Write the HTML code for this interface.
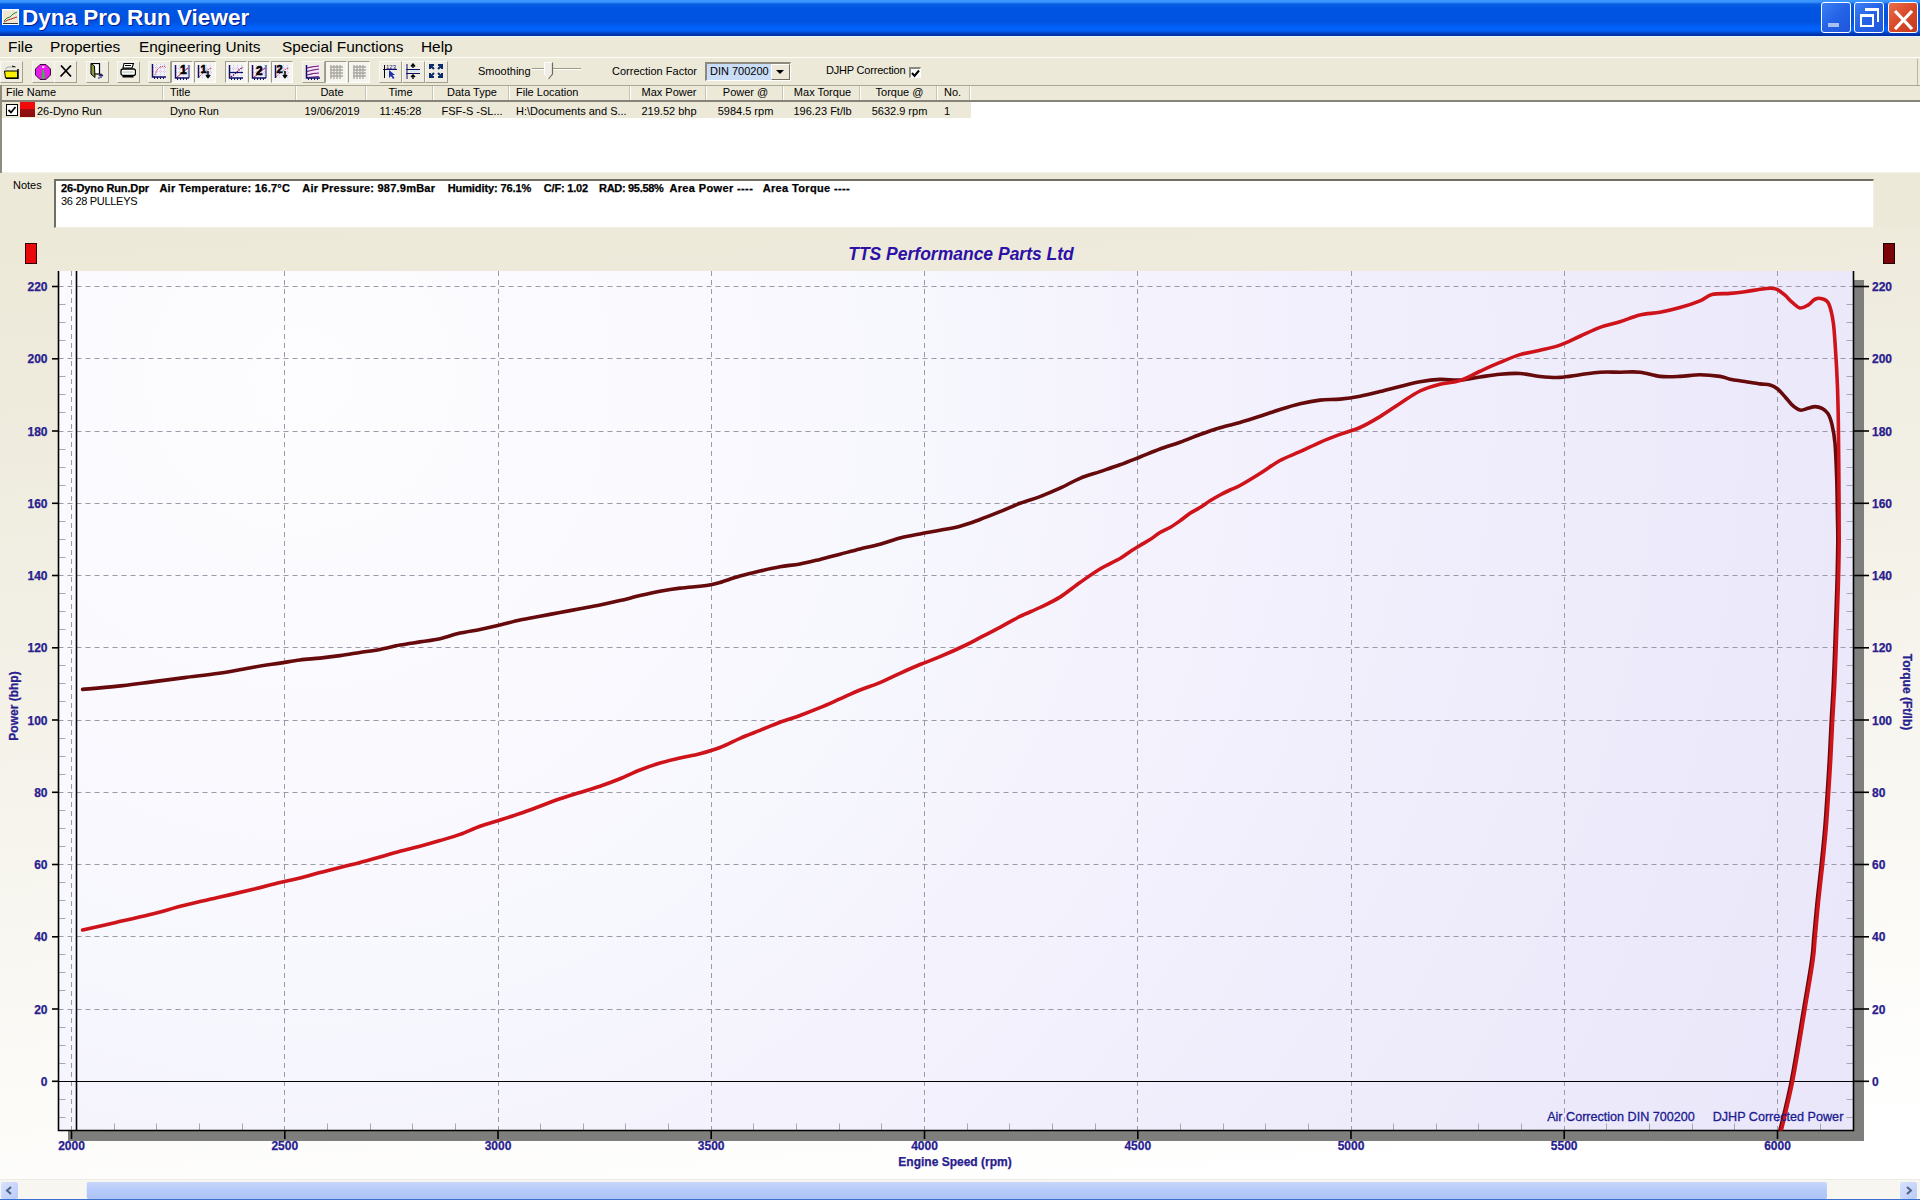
<!DOCTYPE html>
<html><head><meta charset="utf-8"><title>Dyna Pro Run Viewer</title>
<style>
*{margin:0;padding:0;box-sizing:border-box}
html,body{width:1920px;height:1200px;overflow:hidden;background:#ECE9D8;font-family:"Liberation Sans",sans-serif;position:relative}
.abs{position:absolute}
#title{left:0;top:0;width:1920px;height:36px;background:linear-gradient(to bottom,#3A95FF 0px,#3A95FF 2px,#0A5EE0 4px,#0055E3 8px,#0053E0 22px,#005EF4 26px,#0064FF 30px,#0052DC 32px,#0036B0 34px,#0030A8 35px,#0030A8 36px)}
#title .t{left:22px;top:5px;color:#fff;font-weight:bold;font-size:22.5px;letter-spacing:0;text-shadow:1px 1px 0 #0A1E8A}
#menubar{left:0;top:36px;width:1920px;height:21px;background:#ECE9D8;border-top:1px solid #E3F3FF}
#menubar span{position:absolute;top:0.5px;font-size:15.4px;color:#000}
#toolbar{left:0;top:57px;width:1920px;height:28px;background:#ECE9D8}
#panel{left:0;top:228px;width:1920px;height:952px;background:linear-gradient(175deg,#ECE9D8 0%,#EFECDF 20%,#F5F3EB 50%,#FBFAF6 75%,#FFFFFF 95%)}
.chart{position:absolute;left:0;top:0}
#list{left:0;top:85px;width:1920px;height:90px}
.hdr{position:absolute;top:0;height:16px;background:#EBEADB;border-right:1px solid #fff;font-size:11px;color:#000}
.hdr span{position:absolute;top:1px}
.cell{position:absolute;top:18px;font-size:11px;color:#000}
#notes{left:54px;top:179px;width:1820px;height:49px;background:#fff;border-top:2px solid #716F64;border-left:2px solid #716F64;border-right:1px solid #F1EFE2;border-bottom:1px solid #F1EFE2}
.nb{top:0.5px;font-size:11px;font-weight:bold;white-space:pre;-webkit-text-stroke:0.25px #000}
#scroll{left:0;top:1179px;width:1920px;height:21px;background:#F7F6F1;border-top:1px solid #ECEBE4}
</style></head><body>
<div id="panel" class="abs"></div>
<svg class="chart" width="1920" height="1200" viewBox="0 0 1920 1200"><defs><radialGradient id="pg" gradientUnits="userSpaceOnUse" cx="300" cy="380" r="1750" fx="300" fy="380"><stop offset="0" stop-color="#FDFDFF"/><stop offset="0.35" stop-color="#F7F7FE"/><stop offset="0.75" stop-color="#EEEBFB"/><stop offset="1" stop-color="#E9E6FA"/></radialGradient><clipPath id="pc"><rect x="58.5" y="271" width="1795.0" height="859.5"/></clipPath></defs><rect x="1854" y="280" width="10" height="861" fill="#7E7E7C"/><rect x="68" y="1131" width="1796" height="10" fill="#7E7E7C"/><rect x="58.5" y="271" width="1795.0" height="859.5" fill="url(#pg)"/><g stroke="#9A9AA8" stroke-width="1" stroke-dasharray="5,4"><line x1="58.5" y1="1009.5" x2="1853.5" y2="1009.5"/><line x1="58.5" y1="936.5" x2="1853.5" y2="936.5"/><line x1="58.5" y1="864.5" x2="1853.5" y2="864.5"/><line x1="58.5" y1="792.5" x2="1853.5" y2="792.5"/><line x1="58.5" y1="720.5" x2="1853.5" y2="720.5"/><line x1="58.5" y1="647.5" x2="1853.5" y2="647.5"/><line x1="58.5" y1="575.5" x2="1853.5" y2="575.5"/><line x1="58.5" y1="503.5" x2="1853.5" y2="503.5"/><line x1="58.5" y1="431.5" x2="1853.5" y2="431.5"/><line x1="58.5" y1="358.5" x2="1853.5" y2="358.5"/><line x1="58.5" y1="286.5" x2="1853.5" y2="286.5"/><line x1="71.5" y1="271" x2="71.5" y2="1130.5"/><line x1="284.5" y1="271" x2="284.5" y2="1130.5"/><line x1="498.5" y1="271" x2="498.5" y2="1130.5"/><line x1="711.5" y1="271" x2="711.5" y2="1130.5"/><line x1="924.5" y1="271" x2="924.5" y2="1130.5"/><line x1="1137.5" y1="271" x2="1137.5" y2="1130.5"/><line x1="1351.5" y1="271" x2="1351.5" y2="1130.5"/><line x1="1564.5" y1="271" x2="1564.5" y2="1130.5"/><line x1="1777.5" y1="271" x2="1777.5" y2="1130.5"/></g><g stroke="#A8A8B0" stroke-width="1"><line x1="58.5" y1="1117.5" x2="65.5" y2="1117.5"/><line x1="1846.5" y1="1117.5" x2="1853.5" y2="1117.5"/><line x1="58.5" y1="1099.5" x2="65.5" y2="1099.5"/><line x1="1846.5" y1="1099.5" x2="1853.5" y2="1099.5"/><line x1="58.5" y1="1063.5" x2="65.5" y2="1063.5"/><line x1="1846.5" y1="1063.5" x2="1853.5" y2="1063.5"/><line x1="58.5" y1="1045.5" x2="65.5" y2="1045.5"/><line x1="1846.5" y1="1045.5" x2="1853.5" y2="1045.5"/><line x1="58.5" y1="1027.5" x2="65.5" y2="1027.5"/><line x1="1846.5" y1="1027.5" x2="1853.5" y2="1027.5"/><line x1="58.5" y1="990.5" x2="65.5" y2="990.5"/><line x1="1846.5" y1="990.5" x2="1853.5" y2="990.5"/><line x1="58.5" y1="972.5" x2="65.5" y2="972.5"/><line x1="1846.5" y1="972.5" x2="1853.5" y2="972.5"/><line x1="58.5" y1="954.5" x2="65.5" y2="954.5"/><line x1="1846.5" y1="954.5" x2="1853.5" y2="954.5"/><line x1="58.5" y1="918.5" x2="65.5" y2="918.5"/><line x1="1846.5" y1="918.5" x2="1853.5" y2="918.5"/><line x1="58.5" y1="900.5" x2="65.5" y2="900.5"/><line x1="1846.5" y1="900.5" x2="1853.5" y2="900.5"/><line x1="58.5" y1="882.5" x2="65.5" y2="882.5"/><line x1="1846.5" y1="882.5" x2="1853.5" y2="882.5"/><line x1="58.5" y1="846.5" x2="65.5" y2="846.5"/><line x1="1846.5" y1="846.5" x2="1853.5" y2="846.5"/><line x1="58.5" y1="828.5" x2="65.5" y2="828.5"/><line x1="1846.5" y1="828.5" x2="1853.5" y2="828.5"/><line x1="58.5" y1="810.5" x2="65.5" y2="810.5"/><line x1="1846.5" y1="810.5" x2="1853.5" y2="810.5"/><line x1="58.5" y1="774.5" x2="65.5" y2="774.5"/><line x1="1846.5" y1="774.5" x2="1853.5" y2="774.5"/><line x1="58.5" y1="756.5" x2="65.5" y2="756.5"/><line x1="1846.5" y1="756.5" x2="1853.5" y2="756.5"/><line x1="58.5" y1="738.5" x2="65.5" y2="738.5"/><line x1="1846.5" y1="738.5" x2="1853.5" y2="738.5"/><line x1="58.5" y1="701.5" x2="65.5" y2="701.5"/><line x1="1846.5" y1="701.5" x2="1853.5" y2="701.5"/><line x1="58.5" y1="683.5" x2="65.5" y2="683.5"/><line x1="1846.5" y1="683.5" x2="1853.5" y2="683.5"/><line x1="58.5" y1="665.5" x2="65.5" y2="665.5"/><line x1="1846.5" y1="665.5" x2="1853.5" y2="665.5"/><line x1="58.5" y1="629.5" x2="65.5" y2="629.5"/><line x1="1846.5" y1="629.5" x2="1853.5" y2="629.5"/><line x1="58.5" y1="611.5" x2="65.5" y2="611.5"/><line x1="1846.5" y1="611.5" x2="1853.5" y2="611.5"/><line x1="58.5" y1="593.5" x2="65.5" y2="593.5"/><line x1="1846.5" y1="593.5" x2="1853.5" y2="593.5"/><line x1="58.5" y1="557.5" x2="65.5" y2="557.5"/><line x1="1846.5" y1="557.5" x2="1853.5" y2="557.5"/><line x1="58.5" y1="539.5" x2="65.5" y2="539.5"/><line x1="1846.5" y1="539.5" x2="1853.5" y2="539.5"/><line x1="58.5" y1="521.5" x2="65.5" y2="521.5"/><line x1="1846.5" y1="521.5" x2="1853.5" y2="521.5"/><line x1="58.5" y1="485.5" x2="65.5" y2="485.5"/><line x1="1846.5" y1="485.5" x2="1853.5" y2="485.5"/><line x1="58.5" y1="467.5" x2="65.5" y2="467.5"/><line x1="1846.5" y1="467.5" x2="1853.5" y2="467.5"/><line x1="58.5" y1="449.5" x2="65.5" y2="449.5"/><line x1="1846.5" y1="449.5" x2="1853.5" y2="449.5"/><line x1="58.5" y1="412.5" x2="65.5" y2="412.5"/><line x1="1846.5" y1="412.5" x2="1853.5" y2="412.5"/><line x1="58.5" y1="394.5" x2="65.5" y2="394.5"/><line x1="1846.5" y1="394.5" x2="1853.5" y2="394.5"/><line x1="58.5" y1="376.5" x2="65.5" y2="376.5"/><line x1="1846.5" y1="376.5" x2="1853.5" y2="376.5"/><line x1="58.5" y1="340.5" x2="65.5" y2="340.5"/><line x1="1846.5" y1="340.5" x2="1853.5" y2="340.5"/><line x1="58.5" y1="322.5" x2="65.5" y2="322.5"/><line x1="1846.5" y1="322.5" x2="1853.5" y2="322.5"/><line x1="58.5" y1="304.5" x2="65.5" y2="304.5"/><line x1="1846.5" y1="304.5" x2="1853.5" y2="304.5"/><line x1="114.5" y1="1123.5" x2="114.5" y2="1130.5"/><line x1="156.5" y1="1123.5" x2="156.5" y2="1130.5"/><line x1="199.5" y1="1123.5" x2="199.5" y2="1130.5"/><line x1="242.5" y1="1123.5" x2="242.5" y2="1130.5"/><line x1="327.5" y1="1123.5" x2="327.5" y2="1130.5"/><line x1="370.5" y1="1123.5" x2="370.5" y2="1130.5"/><line x1="412.5" y1="1123.5" x2="412.5" y2="1130.5"/><line x1="455.5" y1="1123.5" x2="455.5" y2="1130.5"/><line x1="540.5" y1="1123.5" x2="540.5" y2="1130.5"/><line x1="583.5" y1="1123.5" x2="583.5" y2="1130.5"/><line x1="625.5" y1="1123.5" x2="625.5" y2="1130.5"/><line x1="668.5" y1="1123.5" x2="668.5" y2="1130.5"/><line x1="753.5" y1="1123.5" x2="753.5" y2="1130.5"/><line x1="796.5" y1="1123.5" x2="796.5" y2="1130.5"/><line x1="839.5" y1="1123.5" x2="839.5" y2="1130.5"/><line x1="881.5" y1="1123.5" x2="881.5" y2="1130.5"/><line x1="967.5" y1="1123.5" x2="967.5" y2="1130.5"/><line x1="1009.5" y1="1123.5" x2="1009.5" y2="1130.5"/><line x1="1052.5" y1="1123.5" x2="1052.5" y2="1130.5"/><line x1="1095.5" y1="1123.5" x2="1095.5" y2="1130.5"/><line x1="1180.5" y1="1123.5" x2="1180.5" y2="1130.5"/><line x1="1223.5" y1="1123.5" x2="1223.5" y2="1130.5"/><line x1="1265.5" y1="1123.5" x2="1265.5" y2="1130.5"/><line x1="1308.5" y1="1123.5" x2="1308.5" y2="1130.5"/><line x1="1393.5" y1="1123.5" x2="1393.5" y2="1130.5"/><line x1="1436.5" y1="1123.5" x2="1436.5" y2="1130.5"/><line x1="1478.5" y1="1123.5" x2="1478.5" y2="1130.5"/><line x1="1521.5" y1="1123.5" x2="1521.5" y2="1130.5"/><line x1="1606.5" y1="1123.5" x2="1606.5" y2="1130.5"/><line x1="1649.5" y1="1123.5" x2="1649.5" y2="1130.5"/><line x1="1692.5" y1="1123.5" x2="1692.5" y2="1130.5"/><line x1="1734.5" y1="1123.5" x2="1734.5" y2="1130.5"/><line x1="1820.5" y1="1123.5" x2="1820.5" y2="1130.5"/></g><g stroke="#000" stroke-width="1.6"><line x1="52" y1="1081.3" x2="58.5" y2="1081.3"/><line x1="1853.5" y1="1081.3" x2="1869" y2="1081.3"/><line x1="52" y1="1009.0" x2="58.5" y2="1009.0"/><line x1="1853.5" y1="1009.0" x2="1869" y2="1009.0"/><line x1="52" y1="936.8" x2="58.5" y2="936.8"/><line x1="1853.5" y1="936.8" x2="1869" y2="936.8"/><line x1="52" y1="864.5" x2="58.5" y2="864.5"/><line x1="1853.5" y1="864.5" x2="1869" y2="864.5"/><line x1="52" y1="792.3" x2="58.5" y2="792.3"/><line x1="1853.5" y1="792.3" x2="1869" y2="792.3"/><line x1="52" y1="720.0" x2="58.5" y2="720.0"/><line x1="1853.5" y1="720.0" x2="1869" y2="720.0"/><line x1="52" y1="647.8" x2="58.5" y2="647.8"/><line x1="1853.5" y1="647.8" x2="1869" y2="647.8"/><line x1="52" y1="575.5" x2="58.5" y2="575.5"/><line x1="1853.5" y1="575.5" x2="1869" y2="575.5"/><line x1="52" y1="503.3" x2="58.5" y2="503.3"/><line x1="1853.5" y1="503.3" x2="1869" y2="503.3"/><line x1="52" y1="431.0" x2="58.5" y2="431.0"/><line x1="1853.5" y1="431.0" x2="1869" y2="431.0"/><line x1="52" y1="358.8" x2="58.5" y2="358.8"/><line x1="1853.5" y1="358.8" x2="1869" y2="358.8"/><line x1="52" y1="286.5" x2="58.5" y2="286.5"/><line x1="1853.5" y1="286.5" x2="1869" y2="286.5"/><line x1="71.5" y1="1130.5" x2="71.5" y2="1139"/><line x1="284.8" y1="1130.5" x2="284.8" y2="1139"/><line x1="498.0" y1="1130.5" x2="498.0" y2="1139"/><line x1="711.2" y1="1130.5" x2="711.2" y2="1139"/><line x1="924.5" y1="1130.5" x2="924.5" y2="1139"/><line x1="1137.8" y1="1130.5" x2="1137.8" y2="1139"/><line x1="1351.0" y1="1130.5" x2="1351.0" y2="1139"/><line x1="1564.2" y1="1130.5" x2="1564.2" y2="1139"/><line x1="1777.5" y1="1130.5" x2="1777.5" y2="1139"/></g><line x1="58.5" y1="1081.5" x2="1853.5" y2="1081.5" stroke="#000" stroke-width="1.2"/><path d="M58.5,271 V1130.5 H1853.5 V271" fill="none" stroke="#000" stroke-width="1.6"/><line x1="76.5" y1="271" x2="76.5" y2="1130.5" stroke="#000" stroke-width="1.6"/><g clip-path="url(#pc)" fill="none" stroke-linejoin="round" stroke-linecap="round"><path d="M82.60,689.40 C88.13,688.90 104.53,687.62 115.80,686.40 C127.07,685.18 138.73,683.57 150.20,682.10 C161.67,680.63 173.13,679.07 184.60,677.60 C196.07,676.13 207.55,675.03 219.00,673.30 C230.45,671.57 243.13,668.90 253.30,667.20 C263.47,665.50 272.22,664.30 280.00,663.10 C287.78,661.90 293.33,660.83 300.00,660.00 C306.67,659.17 313.33,658.83 320.00,658.10 C326.67,657.37 333.33,656.53 340.00,655.60 C346.67,654.67 353.33,653.53 360.00,652.50 C366.67,651.47 373.33,650.65 380.00,649.40 C386.67,648.15 393.33,646.25 400.00,645.00 C406.67,643.75 413.33,642.94 420.00,641.90 C426.67,640.86 433.33,640.22 440.00,638.75 C446.67,637.28 453.33,634.66 460.00,633.10 C466.67,631.54 473.33,630.75 480.00,629.40 C486.67,628.05 493.33,626.57 500.00,625.00 C506.67,623.43 513.33,621.46 520.00,620.00 C526.67,618.54 533.33,617.50 540.00,616.25 C546.67,615.00 553.33,613.75 560.00,612.50 C566.67,611.25 573.33,610.00 580.00,608.75 C586.67,607.50 593.33,606.36 600.00,605.00 C606.67,603.64 613.33,602.17 620.00,600.60 C626.67,599.03 633.33,597.16 640.00,595.60 C646.67,594.04 653.33,592.50 660.00,591.25 C666.67,590.00 673.33,588.93 680.00,588.10 C686.67,587.27 694.83,586.81 700.00,586.25 C705.17,585.69 707.67,585.38 711.00,584.75 C714.33,584.12 715.17,583.94 720.00,582.50 C724.83,581.06 733.33,578.02 740.00,576.10 C746.67,574.18 753.33,572.57 760.00,571.00 C766.67,569.43 773.33,567.87 780.00,566.70 C786.67,565.53 793.33,565.22 800.00,564.00 C806.67,562.78 813.33,561.03 820.00,559.40 C826.67,557.77 833.33,555.93 840.00,554.20 C846.67,552.47 853.33,550.65 860.00,549.00 C866.67,547.35 873.33,546.13 880.00,544.30 C886.67,542.47 893.33,539.73 900.00,538.00 C906.67,536.27 913.33,535.18 920.00,533.90 C926.67,532.62 933.33,531.57 940.00,530.30 C946.67,529.02 953.33,528.05 960.00,526.25 C966.67,524.45 973.33,521.92 980.00,519.50 C986.67,517.08 993.33,514.40 1000.00,511.70 C1006.67,509.00 1013.33,505.82 1020.00,503.30 C1026.67,500.78 1033.33,499.12 1040.00,496.60 C1046.67,494.08 1053.33,491.25 1060.00,488.20 C1066.67,485.15 1073.33,481.07 1080.00,478.30 C1086.67,475.53 1093.33,473.85 1100.00,471.60 C1106.67,469.35 1113.33,467.23 1120.00,464.80 C1126.67,462.37 1133.33,459.63 1140.00,457.00 C1146.67,454.37 1153.33,451.45 1160.00,449.00 C1166.67,446.55 1173.33,444.72 1180.00,442.30 C1186.67,439.88 1193.33,436.93 1200.00,434.50 C1206.67,432.07 1213.33,429.70 1220.00,427.70 C1226.67,425.70 1233.33,424.41 1240.00,422.50 C1246.67,420.59 1253.33,418.42 1260.00,416.25 C1266.67,414.08 1273.33,411.58 1280.00,409.50 C1286.67,407.42 1293.33,405.32 1300.00,403.75 C1306.67,402.18 1313.33,400.88 1320.00,400.10 C1326.67,399.33 1333.33,399.74 1340.00,399.10 C1346.67,398.46 1353.33,397.50 1360.00,396.25 C1366.67,395.00 1373.33,393.24 1380.00,391.60 C1386.67,389.96 1393.33,388.05 1400.00,386.40 C1406.67,384.75 1413.33,382.87 1420.00,381.70 C1426.67,380.53 1433.33,379.67 1440.00,379.40 C1446.67,379.13 1453.33,380.50 1460.00,380.10 C1466.67,379.70 1473.33,377.98 1480.00,377.00 C1486.67,376.02 1493.33,374.78 1500.00,374.20 C1506.67,373.62 1513.33,373.12 1520.00,373.50 C1526.67,373.88 1533.33,375.80 1540.00,376.45 C1546.67,377.10 1553.33,377.67 1560.00,377.40 C1566.67,377.12 1573.33,375.67 1580.00,374.80 C1586.67,373.93 1593.33,372.63 1600.00,372.20 C1606.67,371.77 1613.33,372.20 1620.00,372.20 C1626.67,372.20 1633.33,371.50 1640.00,372.20 C1646.67,372.90 1653.33,375.70 1660.00,376.40 C1666.67,377.10 1673.33,376.67 1680.00,376.40 C1686.67,376.13 1693.33,374.80 1700.00,374.80 C1706.67,374.80 1715.00,375.67 1720.00,376.40 C1725.00,377.13 1725.83,378.35 1730.00,379.20 C1734.17,380.05 1740.00,380.73 1745.00,381.50 C1750.00,382.27 1755.83,383.27 1760.00,383.85 C1764.17,384.43 1767.17,384.23 1770.00,385.00 C1772.83,385.77 1774.50,386.55 1777.00,388.50 C1779.50,390.45 1782.50,393.97 1785.00,396.70 C1787.50,399.43 1789.50,402.67 1792.00,404.90 C1794.50,407.13 1797.33,409.53 1800.00,410.10 C1802.67,410.68 1805.50,408.93 1808.00,408.35 C1810.50,407.77 1812.67,406.60 1815.00,406.60 C1817.33,406.60 1819.83,407.18 1822.00,408.35 C1824.17,409.52 1826.33,410.88 1828.00,413.60 C1829.67,416.33 1830.83,419.75 1832.00,424.70 C1833.17,429.65 1834.22,434.37 1835.00,443.30 C1835.78,452.23 1836.30,466.68 1836.70,478.30 C1837.10,489.92 1837.22,502.72 1837.40,513.00 C1837.58,523.28 1837.83,529.67 1837.80,540.00 C1837.77,550.33 1837.48,563.33 1837.20,575.00 C1836.92,586.67 1836.50,598.00 1836.10,610.00 C1835.70,622.00 1835.27,634.50 1834.80,647.00 C1834.33,659.50 1833.88,672.83 1833.30,685.00 C1832.72,697.17 1831.97,707.50 1831.30,720.00 C1830.63,732.50 1829.97,748.00 1829.30,760.00 C1828.63,772.00 1828.05,780.67 1827.30,792.00 C1826.55,803.33 1825.80,816.00 1824.80,828.00 C1823.80,840.00 1822.55,852.00 1821.30,864.00 C1820.05,876.00 1818.53,888.00 1817.30,900.00 C1816.07,912.00 1814.83,926.00 1813.90,936.00 C1812.97,946.00 1813.38,948.00 1811.70,960.00 C1810.02,972.00 1807.20,987.83 1803.80,1008.00 C1800.40,1028.17 1795.38,1060.17 1791.30,1081.00 C1787.22,1101.83 1781.30,1124.33 1779.30,1133.00" stroke="#660A0C" stroke-width="3.6"/><path d="M82.60,930.00 C88.13,928.75 104.53,925.08 115.80,922.50 C127.07,919.92 138.73,917.37 150.20,914.50 C161.67,911.63 173.13,908.17 184.60,905.30 C196.07,902.43 207.55,899.97 219.00,897.30 C230.45,894.63 243.13,891.77 253.30,889.30 C263.47,886.83 272.22,884.37 280.00,882.50 C287.78,880.63 293.33,879.77 300.00,878.10 C306.67,876.43 313.33,874.27 320.00,872.50 C326.67,870.73 333.33,869.17 340.00,867.50 C346.67,865.83 353.33,864.27 360.00,862.50 C366.67,860.73 373.33,858.77 380.00,856.90 C386.67,855.02 393.33,853.02 400.00,851.25 C406.67,849.48 413.33,848.02 420.00,846.25 C426.67,844.48 433.33,842.58 440.00,840.60 C446.67,838.62 453.33,836.79 460.00,834.40 C466.67,832.01 473.33,828.65 480.00,826.25 C486.67,823.85 493.33,822.12 500.00,820.00 C506.67,817.88 513.33,815.79 520.00,813.50 C526.67,811.21 533.33,808.71 540.00,806.25 C546.67,803.79 553.33,801.04 560.00,798.75 C566.67,796.46 573.33,794.58 580.00,792.50 C586.67,790.42 593.33,788.54 600.00,786.25 C606.67,783.96 613.33,781.46 620.00,778.75 C626.67,776.04 633.33,772.61 640.00,770.00 C646.67,767.39 653.33,765.08 660.00,763.10 C666.67,761.12 673.33,759.66 680.00,758.10 C686.67,756.54 693.33,755.52 700.00,753.75 C706.67,751.98 713.33,750.08 720.00,747.50 C726.67,744.92 733.33,741.17 740.00,738.30 C746.67,735.43 753.33,732.97 760.00,730.30 C766.67,727.63 773.33,724.77 780.00,722.30 C786.67,719.83 793.33,717.93 800.00,715.50 C806.67,713.07 813.33,710.47 820.00,707.70 C826.67,704.93 833.33,701.85 840.00,698.90 C846.67,695.95 853.33,692.70 860.00,690.00 C866.67,687.30 873.33,685.48 880.00,682.70 C886.67,679.92 893.33,676.33 900.00,673.30 C906.67,670.27 913.33,667.27 920.00,664.50 C926.67,661.73 932.33,659.95 940.00,656.70 C947.67,653.45 959.33,648.17 966.00,645.00 C972.67,641.83 974.33,640.65 980.00,637.70 C985.67,634.75 993.33,630.85 1000.00,627.30 C1006.67,623.75 1013.33,619.70 1020.00,616.40 C1026.67,613.10 1033.33,610.72 1040.00,607.50 C1046.67,604.28 1053.33,601.27 1060.00,597.10 C1066.67,592.93 1073.33,587.18 1080.00,582.50 C1086.67,577.82 1093.33,573.00 1100.00,569.00 C1106.67,565.00 1115.00,561.38 1120.00,558.50 C1125.00,555.62 1126.67,553.87 1130.00,551.70 C1133.33,549.53 1136.67,547.52 1140.00,545.50 C1143.33,543.48 1146.67,541.77 1150.00,539.60 C1153.33,537.43 1156.67,534.52 1160.00,532.50 C1163.33,530.48 1166.67,529.45 1170.00,527.50 C1173.33,525.55 1176.67,523.17 1180.00,520.80 C1183.33,518.43 1186.67,515.52 1190.00,513.30 C1193.33,511.08 1196.67,509.58 1200.00,507.50 C1203.33,505.42 1206.67,502.88 1210.00,500.80 C1213.33,498.72 1216.67,496.80 1220.00,495.00 C1223.33,493.20 1226.67,491.58 1230.00,490.00 C1233.33,488.42 1235.00,488.25 1240.00,485.50 C1245.00,482.75 1253.33,477.67 1260.00,473.50 C1266.67,469.33 1273.33,464.13 1280.00,460.50 C1286.67,456.87 1293.33,454.73 1300.00,451.70 C1306.67,448.67 1313.33,445.18 1320.00,442.30 C1326.67,439.42 1333.33,436.87 1340.00,434.40 C1346.67,431.93 1353.33,430.47 1360.00,427.50 C1366.67,424.53 1373.33,420.60 1380.00,416.60 C1386.67,412.60 1393.33,407.77 1400.00,403.50 C1406.67,399.23 1413.33,394.20 1420.00,391.00 C1426.67,387.80 1433.33,386.03 1440.00,384.30 C1446.67,382.57 1453.33,382.78 1460.00,380.60 C1466.67,378.43 1473.33,374.28 1480.00,371.25 C1486.67,368.22 1493.33,365.17 1500.00,362.40 C1506.67,359.62 1513.33,356.62 1520.00,354.60 C1526.67,352.58 1533.33,351.88 1540.00,350.30 C1546.67,348.72 1553.33,347.44 1560.00,345.10 C1566.67,342.76 1573.33,339.20 1580.00,336.25 C1586.67,333.30 1593.33,329.82 1600.00,327.40 C1606.67,324.97 1613.33,323.78 1620.00,321.70 C1626.67,319.62 1633.33,316.47 1640.00,314.90 C1646.67,313.33 1653.33,313.52 1660.00,312.30 C1666.67,311.08 1673.33,309.52 1680.00,307.60 C1686.67,305.68 1694.67,302.97 1700.00,300.80 C1705.33,298.63 1707.00,295.83 1712.00,294.60 C1717.00,293.37 1724.50,293.88 1730.00,293.40 C1735.50,292.92 1740.00,292.38 1745.00,291.70 C1750.00,291.02 1755.83,289.88 1760.00,289.30 C1764.17,288.72 1767.17,288.20 1770.00,288.20 C1772.83,288.20 1774.50,288.13 1777.00,289.30 C1779.50,290.47 1782.50,293.05 1785.00,295.20 C1787.50,297.35 1789.50,300.07 1792.00,302.20 C1794.50,304.33 1797.33,307.52 1800.00,308.00 C1802.67,308.48 1805.50,306.56 1808.00,305.10 C1810.50,303.64 1812.67,300.32 1815.00,299.25 C1817.33,298.18 1819.75,298.02 1822.00,298.70 C1824.25,299.38 1826.63,299.42 1828.50,303.30 C1830.37,307.18 1832.03,314.22 1833.20,322.00 C1834.37,329.78 1834.80,339.50 1835.50,350.00 C1836.20,360.50 1836.93,373.33 1837.40,385.00 C1837.87,396.67 1838.07,406.38 1838.30,420.00 C1838.53,433.62 1838.65,446.70 1838.80,466.70 C1838.95,486.70 1839.23,521.95 1839.20,540.00 C1839.17,558.05 1838.88,563.33 1838.60,575.00 C1838.32,586.67 1837.90,598.00 1837.50,610.00 C1837.10,622.00 1836.67,634.50 1836.20,647.00 C1835.73,659.50 1835.28,672.83 1834.70,685.00 C1834.12,697.17 1833.37,707.50 1832.70,720.00 C1832.03,732.50 1831.37,748.00 1830.70,760.00 C1830.03,772.00 1829.45,780.67 1828.70,792.00 C1827.95,803.33 1827.20,816.00 1826.20,828.00 C1825.20,840.00 1823.95,852.00 1822.70,864.00 C1821.45,876.00 1819.93,888.00 1818.70,900.00 C1817.47,912.00 1816.23,926.00 1815.30,936.00 C1814.37,946.00 1814.78,948.00 1813.10,960.00 C1811.42,972.00 1808.60,987.83 1805.20,1008.00 C1801.80,1028.17 1796.78,1060.17 1792.70,1081.00 C1788.62,1101.83 1782.70,1124.33 1780.70,1133.00" stroke="#CE141A" stroke-width="3.6"/></g><g font-family="Liberation Sans, sans-serif" font-weight="bold" font-size="12" fill="#28208E" stroke="#28208E" stroke-width="0.25"><text x="47.5" y="1085.8" text-anchor="end">0</text><text x="1872" y="1085.8">0</text><text x="47.5" y="1013.5" text-anchor="end">20</text><text x="1872" y="1013.5">20</text><text x="47.5" y="941.3" text-anchor="end">40</text><text x="1872" y="941.3">40</text><text x="47.5" y="869.0" text-anchor="end">60</text><text x="1872" y="869.0">60</text><text x="47.5" y="796.8" text-anchor="end">80</text><text x="1872" y="796.8">80</text><text x="47.5" y="724.5" text-anchor="end">100</text><text x="1872" y="724.5">100</text><text x="47.5" y="652.3" text-anchor="end">120</text><text x="1872" y="652.3">120</text><text x="47.5" y="580.0" text-anchor="end">140</text><text x="1872" y="580.0">140</text><text x="47.5" y="507.8" text-anchor="end">160</text><text x="1872" y="507.8">160</text><text x="47.5" y="435.5" text-anchor="end">180</text><text x="1872" y="435.5">180</text><text x="47.5" y="363.3" text-anchor="end">200</text><text x="1872" y="363.3">200</text><text x="47.5" y="291.0" text-anchor="end">220</text><text x="1872" y="291.0">220</text><text x="71.5" y="1150" text-anchor="middle">2000</text><text x="284.8" y="1150" text-anchor="middle">2500</text><text x="498.0" y="1150" text-anchor="middle">3000</text><text x="711.2" y="1150" text-anchor="middle">3500</text><text x="924.5" y="1150" text-anchor="middle">4000</text><text x="1137.8" y="1150" text-anchor="middle">4500</text><text x="1351.0" y="1150" text-anchor="middle">5000</text><text x="1564.2" y="1150" text-anchor="middle">5500</text><text x="1777.5" y="1150" text-anchor="middle">6000</text></g><text x="955" y="1166" text-anchor="middle" font-family="Liberation Sans, sans-serif" font-weight="bold" font-size="12" fill="#28208E" stroke="#28208E" stroke-width="0.25">Engine Speed (rpm)</text><text transform="translate(18,706) rotate(-90)" text-anchor="middle" font-family="Liberation Sans, sans-serif" font-weight="bold" font-size="12" fill="#28208E" stroke="#28208E" stroke-width="0.25">Power (bhp)</text><text transform="translate(1903,692) rotate(90)" text-anchor="middle" font-family="Liberation Sans, sans-serif" font-weight="bold" font-size="12" fill="#28208E" stroke="#28208E" stroke-width="0.25">Torque (Ft/lb)</text><text x="1621" y="1121" text-anchor="middle" font-family="Liberation Sans, sans-serif" font-size="12.6" fill="#1A1A90" stroke="#1A1A90" stroke-width="0.3">Air Correction DIN 700200</text><text x="1778" y="1121" text-anchor="middle" font-family="Liberation Sans, sans-serif" font-size="12.6" fill="#1A1A90" stroke="#1A1A90" stroke-width="0.3">DJHP Corrected Power</text><text x="961" y="260" text-anchor="middle" font-family="Liberation Sans, sans-serif" font-weight="bold" font-style="italic" font-size="17.5" fill="#2C10A8">TTS Performance Parts Ltd</text><rect x="25.5" y="243.5" width="11" height="20" fill="#E80A0A" stroke="#300" stroke-width="1"/><rect x="1883.5" y="243.5" width="11" height="20" fill="#7A0408" stroke="#200" stroke-width="1"/></svg>
<div id="title" class="abs">
  <svg class="abs" style="left:2px;top:9px" width="17" height="16" viewBox="0 0 17 16">
    <rect x="0.5" y="0.5" width="16" height="15" fill="#F2EEDE" stroke="#fff"/>
    <rect x="1" y="2" width="15" height="12" fill="#EDE7D4"/>
    <polyline points="2,12 5,9 8,8 11,5 15,3" fill="none" stroke="#2E8B2E" stroke-width="1"/>
    <polyline points="2,13 6,11 9,10 12,9 15,8" fill="none" stroke="#C03020" stroke-width="1"/>
    <line x1="1" y1="14.5" x2="16" y2="14.5" stroke="#333"/>
  </svg>
  <div class="abs t">Dyna Pro Run Viewer</div>
  <!-- min -->
  <div class="abs" style="left:1821px;top:2px;width:30px;height:31px;border:1px solid #fff;border-radius:3px;background:linear-gradient(135deg,#3C80F4,#2462E6 50%,#1F56DC)">
    <div class="abs" style="left:6px;top:20px;width:11px;height:4px;background:#A8C0F4"></div>
  </div>
  <div class="abs" style="left:1854px;top:2px;width:30px;height:31px;border:1px solid #fff;border-radius:3px;background:linear-gradient(135deg,#3C80F4,#2462E6 50%,#1F56DC)">
    <div class="abs" style="left:5px;top:11px;width:14px;height:13px;border:2.5px solid #fff;border-top-width:3px"></div>
    <div class="abs" style="left:10px;top:5px;width:14px;height:14px;border:2.5px solid #fff;border-top-width:3px;border-left:none;border-bottom:none"></div>
  </div>
  <div class="abs" style="left:1888px;top:2px;width:30px;height:31px;border:1px solid #fff;border-radius:3px;background:linear-gradient(135deg,#E8704C,#D8482A 50%,#C63C20)">
    <svg class="abs" style="left:4px;top:5px" width="22" height="22" viewBox="0 0 22 22"><path d="M2,3 L19,21 M19,3 L2,21" stroke="#fff" stroke-width="3.2"/></svg>
  </div>
</div>
<div id="menubar" class="abs">
  <span style="left:8px">File</span>
  <span style="left:50px">Properties</span>
  <span style="left:139px">Engineering Units</span>
  <span style="left:282px">Special Functions</span>
  <span style="left:421px">Help</span>
</div>
<div id="toolbar" class="abs"><div class="abs" style="left:0px;top:4px;width:23px;height:22px;background:#EFEDE2;border-right:1px solid #A3A08C;border-bottom:1px solid #A3A08C;border-top:1px solid #F8F7F2;border-left:1px solid #F8F7F2"></div><svg class="abs" style="left:3px;top:6px" width="16" height="16" viewBox="0 0 16 16"><path d="M2,6 L5,4 L9,4 L11,5" fill="none" stroke="#A8A8A0" stroke-width="1"/><path d="M12.5,4 L9,3" stroke="#000" stroke-width="1"/><path d="M1.5,8 L14.5,8 L14.5,15 L2.5,15 Z" fill="#F8F200" stroke="#000" stroke-width="1"/><path d="M15,6 V15.5 H3" fill="none" stroke="#000" stroke-width="1.5"/></svg><div class="abs" style="left:32px;top:4px;width:23px;height:22px;background:#EFEDE2;border-right:1px solid #A3A08C;border-bottom:1px solid #A3A08C;border-top:1px solid #F8F7F2;border-left:1px solid #F8F7F2"></div><svg class="abs" style="left:35px;top:7px" width="16" height="16" viewBox="0 0 16 16"><polygon points="5,0.5 11,0.5 15.5,5 15.5,11 11,15.5 5,15.5 0.5,11 0.5,5" fill="#E81CE8" stroke="#3A0A3A" stroke-width="1"/><rect x="7" y="2" width="2.5" height="2" fill="#F8C0F8"/><path d="M6.5,14.5 L7.5,6 L9,6 L10,14.5 Z" fill="#30C040"/></svg><div class="abs" style="left:54px;top:4px;width:23px;height:22px;background:#EFEDE2;border-right:1px solid #A3A08C;border-bottom:1px solid #A3A08C;border-top:1px solid #F8F7F2;border-left:1px solid #F8F7F2"></div><svg class="abs" style="left:58px;top:7px" width="16" height="16" viewBox="0 0 16 16"><path d="M3,1.5 L13,12.5 M13,1.5 L2.5,12.5" stroke="#000" stroke-width="1.8"/></svg><div class="abs" style="left:86px;top:4px;width:23px;height:22px;background:#EFEDE2;border-right:1px solid #A3A08C;border-bottom:1px solid #A3A08C;border-top:1px solid #F8F7F2;border-left:1px solid #F8F7F2"></div><svg class="abs" style="left:89px;top:6px" width="16" height="16" viewBox="0 0 16 16"><rect x="2.5" y="0.5" width="8" height="10.5" fill="#fff" stroke="#000" stroke-width="1.2"/><path d="M2,0.5 L5.5,3 L6,14.5 L2,11 Z" fill="#8A9A38" stroke="#000" stroke-width="1"/><path d="M9,15 H11 M12,15 V11.5 M10,13 L12,11 L14,13" fill="none" stroke="#1A1A6A" stroke-width="1.2"/></svg><div class="abs" style="left:117px;top:4px;width:23px;height:22px;background:#EFEDE2;border-right:1px solid #A3A08C;border-bottom:1px solid #A3A08C;border-top:1px solid #F8F7F2;border-left:1px solid #F8F7F2"></div><svg class="abs" style="left:120px;top:6px" width="16" height="16" viewBox="0 0 16 16"><path d="M4,0.5 H13.5 L12,5 H3 Z" fill="#fff" stroke="#000" stroke-width="1.1"/><line x1="5" y1="2.5" x2="11" y2="2.5" stroke="#000"/><rect x="1" y="6" width="14.5" height="6.5" rx="2" fill="#fff" stroke="#000" stroke-width="1.3"/><rect x="2.5" y="8.3" width="11" height="1.6" fill="#C8D8C8"/><rect x="2.5" y="13" width="11" height="1.5" fill="#000"/></svg><div class="abs" style="left:148px;top:4px;width:23px;height:22px;background:#EFEDE2;border-right:1px solid #A3A08C;border-bottom:1px solid #A3A08C;border-top:1px solid #F8F7F2;border-left:1px solid #F8F7F2"></div><svg class="abs" style="left:151px;top:6px" width="16" height="16" viewBox="0 0 16 16"><rect x="2" y="1" width="13" height="13" fill="#F6EEF8"/><g stroke="#A8D8F4" stroke-width="1" stroke-dasharray="1,1"><line x1="5.5" y1="1" x2="5.5" y2="14"/><line x1="9.5" y1="1" x2="9.5" y2="14"/><line x1="13.5" y1="1" x2="13.5" y2="14"/></g><g stroke="#F0B8D8" stroke-width="1" stroke-dasharray="1,1"><line x1="2" y1="4.5" x2="15" y2="4.5"/><line x1="2" y1="8.5" x2="15" y2="8.5"/></g><path d="M3,14 L6,7 L9,4 L13,3 L15,4" fill="none" stroke="#C02020" stroke-width="1" stroke-dasharray="1,1"/><path d="M1.5,1 V14 H15" fill="none" stroke="#10106A" stroke-width="1.5"/><path d="M3.5,14 V16 M6.5,14 V16 M9.5,14 V16 M12.5,14 V16" stroke="#10106A" stroke-width="1"/></svg><div class="abs" style="left:171px;top:4px;width:22px;height:22px;background:#F5F4EF;border-top:1px solid #9D9A86;border-left:1px solid #9D9A86;border-right:1px solid #fff;border-bottom:1px solid #fff"></div><svg class="abs" style="left:174px;top:7px" width="16" height="16" viewBox="0 0 16 16"><rect x="2" y="1" width="13" height="13" fill="#F6EEF8"/><g stroke="#A8D8F4" stroke-width="1" stroke-dasharray="1,1"><line x1="5.5" y1="1" x2="5.5" y2="14"/><line x1="9.5" y1="1" x2="9.5" y2="14"/><line x1="13.5" y1="1" x2="13.5" y2="14"/></g><g stroke="#F0B8D8" stroke-width="1" stroke-dasharray="1,1"><line x1="2" y1="4.5" x2="15" y2="4.5"/><line x1="2" y1="8.5" x2="15" y2="8.5"/></g><path d="M2,14 L14,4" fill="none" stroke="#C02060" stroke-width="1"/><path d="M1.5,1 V14 H15" fill="none" stroke="#10106A" stroke-width="1.5"/><path d="M3.5,14 V16 M6.5,14 V16 M9.5,14 V16 M12.5,14 V16" stroke="#10106A" stroke-width="1"/><path d="M15,1 V14" stroke="#10106A" stroke-width="1"/><text x="6" y="10" font-family="Liberation Sans" font-weight="bold" font-size="12" fill="#000" stroke="#000" stroke-width="0.6">1</text></svg><div class="abs" style="left:194px;top:4px;width:22px;height:22px;background:#F5F4EF;border-top:1px solid #9D9A86;border-left:1px solid #9D9A86;border-right:1px solid #fff;border-bottom:1px solid #fff"></div><svg class="abs" style="left:197px;top:7px" width="16" height="16" viewBox="0 0 16 16"><rect x="2" y="1" width="13" height="13" fill="#F6EEF8"/><g stroke="#A8D8F4" stroke-width="1" stroke-dasharray="1,1"><line x1="5.5" y1="1" x2="5.5" y2="14"/><line x1="9.5" y1="1" x2="9.5" y2="14"/><line x1="13.5" y1="1" x2="13.5" y2="14"/></g><g stroke="#F0B8D8" stroke-width="1" stroke-dasharray="1,1"><line x1="2" y1="4.5" x2="15" y2="4.5"/><line x1="2" y1="8.5" x2="15" y2="8.5"/></g><path d="M2,13 L7,8 L14,4" fill="none" stroke="#C02020" stroke-width="1" stroke-dasharray="1,1"/><path d="M1.5,1 V14" stroke="#10106A" stroke-width="1.5"/><text x="3.5" y="9" font-family="Liberation Sans" font-weight="bold" font-size="11" fill="#000" stroke="#000" stroke-width="0.6">1</text><path d="M11,7 V13 M9,11 L11,13.5 L13,11" fill="none" stroke="#000" stroke-width="1.5"/></svg><div class="abs" style="left:225px;top:4px;width:22px;height:22px;background:#F5F4EF;border-top:1px solid #9D9A86;border-left:1px solid #9D9A86;border-right:1px solid #fff;border-bottom:1px solid #fff"></div><svg class="abs" style="left:228px;top:7px" width="16" height="16" viewBox="0 0 16 16"><rect x="2" y="1" width="13" height="13" fill="#F6EEF8"/><g stroke="#A8D8F4" stroke-width="1" stroke-dasharray="1,1"><line x1="5.5" y1="1" x2="5.5" y2="14"/><line x1="9.5" y1="1" x2="9.5" y2="14"/><line x1="13.5" y1="1" x2="13.5" y2="14"/></g><g stroke="#F0B8D8" stroke-width="1" stroke-dasharray="1,1"><line x1="2" y1="4.5" x2="15" y2="4.5"/><line x1="2" y1="8.5" x2="15" y2="8.5"/></g><path d="M3,13 L8,9 L11,6 L15,3" fill="none" stroke="#7A1040" stroke-width="1.2" stroke-dasharray="1.5,1"/><path d="M2,8.5 L15,8.5" stroke="#10106A" stroke-width="1.2"/><path d="M1.5,1 V14 H15" fill="none" stroke="#10106A" stroke-width="1.5"/><path d="M3.5,14 V16 M6.5,14 V16 M9.5,14 V16 M12.5,14 V16" stroke="#10106A" stroke-width="1"/></svg><div class="abs" style="left:248px;top:4px;width:22px;height:22px;background:#F5F4EF;border-top:1px solid #9D9A86;border-left:1px solid #9D9A86;border-right:1px solid #fff;border-bottom:1px solid #fff"></div><svg class="abs" style="left:251px;top:7px" width="16" height="16" viewBox="0 0 16 16"><rect x="2" y="1" width="13" height="13" fill="#F6EEF8"/><g stroke="#A8D8F4" stroke-width="1" stroke-dasharray="1,1"><line x1="5.5" y1="1" x2="5.5" y2="14"/><line x1="9.5" y1="1" x2="9.5" y2="14"/><line x1="13.5" y1="1" x2="13.5" y2="14"/></g><g stroke="#F0B8D8" stroke-width="1" stroke-dasharray="1,1"><line x1="2" y1="4.5" x2="15" y2="4.5"/><line x1="2" y1="8.5" x2="15" y2="8.5"/></g><path d="M2,14 L14,4" fill="none" stroke="#C02060" stroke-width="1"/><path d="M1.5,1 V14 H15" fill="none" stroke="#10106A" stroke-width="1.5"/><path d="M3.5,14 V16 M6.5,14 V16 M9.5,14 V16 M12.5,14 V16" stroke="#10106A" stroke-width="1"/><path d="M15,1 V14" stroke="#10106A" stroke-width="1"/><text x="5" y="11" font-family="Liberation Sans" font-weight="bold" font-size="12" fill="#000" stroke="#000" stroke-width="0.6">2</text></svg><div class="abs" style="left:271px;top:4px;width:22px;height:22px;background:#F5F4EF;border-top:1px solid #9D9A86;border-left:1px solid #9D9A86;border-right:1px solid #fff;border-bottom:1px solid #fff"></div><svg class="abs" style="left:274px;top:7px" width="16" height="16" viewBox="0 0 16 16"><rect x="2" y="1" width="13" height="13" fill="#F6EEF8"/><g stroke="#A8D8F4" stroke-width="1" stroke-dasharray="1,1"><line x1="5.5" y1="1" x2="5.5" y2="14"/><line x1="9.5" y1="1" x2="9.5" y2="14"/><line x1="13.5" y1="1" x2="13.5" y2="14"/></g><g stroke="#F0B8D8" stroke-width="1" stroke-dasharray="1,1"><line x1="2" y1="4.5" x2="15" y2="4.5"/><line x1="2" y1="8.5" x2="15" y2="8.5"/></g><path d="M2,13 L7,8 L14,4" fill="none" stroke="#C02020" stroke-width="1" stroke-dasharray="1,1"/><path d="M1.5,1 V14" stroke="#10106A" stroke-width="1.5"/><text x="2.5" y="9" font-family="Liberation Sans" font-weight="bold" font-size="11" fill="#000" stroke="#000" stroke-width="0.6">2</text><path d="M11,7 V13 M9,11 L11,13.5 L13,11" fill="none" stroke="#000" stroke-width="1.5"/></svg><div class="abs" style="left:302px;top:4px;width:23px;height:22px;background:#EFEDE2;border-right:1px solid #A3A08C;border-bottom:1px solid #A3A08C;border-top:1px solid #F8F7F2;border-left:1px solid #F8F7F2"></div><svg class="abs" style="left:305px;top:7px" width="16" height="16" viewBox="0 0 16 16"><rect x="1" y="1" width="14" height="14" fill="#F2E8F8"/><g stroke="#7A1A7A" stroke-width="1.2"><path d="M2,4 L6,3 L14,2"/><path d="M2,7.5 L8,6 L14,5"/><path d="M2,11 L8,9.5 L14,9"/><path d="M2,13.5 L14,12.5"/></g><path d="M1.5,1 V14 H15" fill="none" stroke="#10106A" stroke-width="1.5"/><path d="M3.5,14 V16 M6.5,14 V16 M9.5,14 V16 M12.5,14 V16" stroke="#10106A" stroke-width="1"/></svg><div class="abs" style="left:325px;top:4px;width:22px;height:22px;background:#F5F4EF;border-top:1px solid #9D9A86;border-left:1px solid #9D9A86;border-right:1px solid #fff;border-bottom:1px solid #fff"></div><svg class="abs" style="left:328px;top:7px" width="16" height="16" viewBox="0 0 16 16"><g stroke="#A8A8A0" stroke-width="1.3"><path d="M3,1 V15 M6,1 V15 M9,1 V15 M12,1 V15 M2,3 H15 M2,6 H15 M2,9 H15 M2,12 H15"/></g></svg><div class="abs" style="left:348px;top:4px;width:22px;height:22px;background:#F5F4EF;border-top:1px solid #9D9A86;border-left:1px solid #9D9A86;border-right:1px solid #fff;border-bottom:1px solid #fff"></div><svg class="abs" style="left:351px;top:7px" width="16" height="16" viewBox="0 0 16 16"><g stroke="#A8A8A0" stroke-width="1.3"><path d="M3,1 V15 M6,1 V15 M9,1 V15 M12,1 V15 M2,3 H15 M2,6 H15 M2,9 H15 M2,12 H15"/></g></svg><div class="abs" style="left:379px;top:4px;width:23px;height:22px;background:#EFEDE2;border-right:1px solid #A3A08C;border-bottom:1px solid #A3A08C;border-top:1px solid #F8F7F2;border-left:1px solid #F8F7F2"></div><svg class="abs" style="left:382px;top:6px" width="16" height="16" viewBox="0 0 16 16"><text x="4" y="5.5" font-family="Liberation Sans" font-size="6" fill="#10106A">123</text><path d="M1,6.5 H15" stroke="#10106A" stroke-width="1"/><path d="M2.5,2 V15" stroke="#000" stroke-width="1"/><path d="M7,7 L7,15 L9,13 L11,16 L12.5,15 L10.5,12 L13,12 Z" fill="#1A30B0"/></svg><div class="abs" style="left:402px;top:4px;width:23px;height:22px;background:#EFEDE2;border-right:1px solid #A3A08C;border-bottom:1px solid #A3A08C;border-top:1px solid #F8F7F2;border-left:1px solid #F8F7F2"></div><svg class="abs" style="left:405px;top:6px" width="16" height="16" viewBox="0 0 16 16"><path d="M1,6.5 H15 M1,10.5 H15" stroke="#10106A" stroke-width="1.2"/><path d="M2,1 V16" stroke="#10106A" stroke-width="1"/><path d="M8,1 V5 M6,3.5 L8,1 L10,3.5 M8,12 V16 M6,14 L8,12 L10,14" stroke="#000" stroke-width="1.4" fill="none"/><g stroke="#B8E0F8"><path d="M5,8 H14"/></g></svg><div class="abs" style="left:425px;top:4px;width:23px;height:22px;background:#EFEDE2;border-right:1px solid #A3A08C;border-bottom:1px solid #A3A08C;border-top:1px solid #F8F7F2;border-left:1px solid #F8F7F2"></div><svg class="abs" style="left:428px;top:6px" width="16" height="16" viewBox="0 0 16 16"><g stroke="#0A2A6A" stroke-width="2" fill="none"><path d="M2,6 V2 H6 M2,2 L6,6"/><path d="M14,6 V2 H10 M14,2 L10,6"/><path d="M2,10 V14 H6 M2,14 L6,10"/><path d="M14,10 V14 H10 M14,14 L10,10"/></g></svg><div class="abs" style="left:478px;top:8px;font-size:11px">Smoothing</div><div class="abs" style="left:532px;top:11px;width:49px;height:2px;background:#9D9A86;border-bottom:1px solid #fff"></div><svg class="abs" style="left:543px;top:5px" width="11" height="18" viewBox="0 0 11 18"><path d="M1.5,0.5 H9.5 V12 L5.5,17 L1.5,12 Z" fill="#F0EEE4" stroke="#fff" stroke-width="1"/><path d="M9.5,0.5 V12 L5.5,17" fill="none" stroke="#6E6C60" stroke-width="1.2"/></svg><div class="abs" style="left:612px;top:8px;font-size:11px">Correction Factor</div><div class="abs" style="left:705px;top:5px;width:86px;height:19px;background:#fff;border-top:2px solid #8C8A7C;border-left:2px solid #8C8A7C;border-right:1px solid #fff;border-bottom:1px solid #fff"></div><div class="abs" style="left:707px;top:7px;width:64px;height:16px;background:#C9DDF7"></div><div class="abs" style="left:710px;top:8px;font-size:11px">DIN 700200</div><div class="abs" style="left:771px;top:7px;width:19px;height:16px;background:#ECE9D8;border-right:1px solid #716F64;border-bottom:1px solid #716F64;border-top:1px solid #fff;border-left:1px solid #fff"></div><svg class="abs" style="left:776px;top:13px" width="8" height="5" viewBox="0 0 8 5"><path d="M0,0 H8 L4,4 Z" fill="#000"/></svg><div class="abs" style="left:826px;top:7px;font-size:11px;letter-spacing:-0.2px">DJHP Correction</div><div class="abs" style="left:909px;top:10px;width:12px;height:11px;background:#fff;border-top:2px solid #8C8A7C;border-left:2px solid #8C8A7C;border-right:1px solid #fff;border-bottom:1px solid #fff"></div><svg class="abs" style="left:911px;top:12px" width="9" height="9" viewBox="0 0 9 9"><path d="M1,4 L3.5,7 L8,1.5" fill="none" stroke="#000" stroke-width="2"/></svg><div class="abs" style="left:0;top:0;width:1920px;height:1px;background:#FFFEF6"></div><div class="abs" style="left:0;top:28px;width:1920px;height:1px;background:#A8A694"></div><div class="abs" style="left:1917px;top:2px;width:1px;height:26px;background:#B8B5A2"></div></div>
<div id="list" class="abs">
  <div class="abs" style="left:0;top:0;width:1920px;height:17px;background:#ECE9D8;border-bottom:2px solid #86847A;border-top:1px solid #A9A796"></div>
  <div class="abs" style="left:0;top:17px;width:1920px;height:71px;background:#fff;border-bottom:1px solid #F2F1E8"></div>
  <div class="abs" style="left:0;top:0;width:2px;height:88px;background:#8E8D80"></div>
  <div class="abs" style="left:2px;top:17px;width:969px;height:16px;background:#ECE9D8"></div><div class="abs" style="top:1px;font-size:11px;left:6px">File Name</div><div class="abs" style="left:162px;top:1px;width:1px;height:14px;background:#C7C5B2"></div><div class="abs" style="left:163px;top:1px;width:1px;height:14px;background:#fff"></div><div class="abs" style="top:1px;font-size:11px;left:170px">Title</div><div class="abs" style="left:295px;top:1px;width:1px;height:14px;background:#C7C5B2"></div><div class="abs" style="left:296px;top:1px;width:1px;height:14px;background:#fff"></div><div class="abs" style="top:1px;font-size:11px;left:297px;width:70px;text-align:center">Date</div><div class="abs" style="left:365px;top:1px;width:1px;height:14px;background:#C7C5B2"></div><div class="abs" style="left:366px;top:1px;width:1px;height:14px;background:#fff"></div><div class="abs" style="top:1px;font-size:11px;left:367px;width:67px;text-align:center">Time</div><div class="abs" style="left:432px;top:1px;width:1px;height:14px;background:#C7C5B2"></div><div class="abs" style="left:433px;top:1px;width:1px;height:14px;background:#fff"></div><div class="abs" style="top:1px;font-size:11px;left:434px;width:76px;text-align:center">Data Type</div><div class="abs" style="left:508px;top:1px;width:1px;height:14px;background:#C7C5B2"></div><div class="abs" style="left:509px;top:1px;width:1px;height:14px;background:#fff"></div><div class="abs" style="top:1px;font-size:11px;left:516px">File Location</div><div class="abs" style="left:629px;top:1px;width:1px;height:14px;background:#C7C5B2"></div><div class="abs" style="left:630px;top:1px;width:1px;height:14px;background:#fff"></div><div class="abs" style="top:1px;font-size:11px;left:631px;width:76px;text-align:center">Max Power</div><div class="abs" style="left:705px;top:1px;width:1px;height:14px;background:#C7C5B2"></div><div class="abs" style="left:706px;top:1px;width:1px;height:14px;background:#fff"></div><div class="abs" style="top:1px;font-size:11px;left:707px;width:77px;text-align:center">Power @</div><div class="abs" style="left:782px;top:1px;width:1px;height:14px;background:#C7C5B2"></div><div class="abs" style="left:783px;top:1px;width:1px;height:14px;background:#fff"></div><div class="abs" style="top:1px;font-size:11px;left:784px;width:77px;text-align:center">Max Torque</div><div class="abs" style="left:859px;top:1px;width:1px;height:14px;background:#C7C5B2"></div><div class="abs" style="left:860px;top:1px;width:1px;height:14px;background:#fff"></div><div class="abs" style="top:1px;font-size:11px;left:861px;width:77px;text-align:center">Torque @</div><div class="abs" style="left:936px;top:1px;width:1px;height:14px;background:#C7C5B2"></div><div class="abs" style="left:937px;top:1px;width:1px;height:14px;background:#fff"></div><div class="abs" style="top:1px;font-size:11px;left:944px">No.</div><div class="abs" style="left:969px;top:1px;width:1px;height:14px;background:#C7C5B2"></div><div class="abs" style="left:970px;top:1px;width:1px;height:14px;background:#fff"></div><div class="abs" style="top:20px;font-size:11px;left:37px;white-space:nowrap">26-Dyno Run</div><div class="abs" style="top:20px;font-size:11px;left:170px;white-space:nowrap">Dyno Run</div><div class="abs" style="top:20px;font-size:11px;left:297px;width:70px;text-align:center;white-space:nowrap">19/06/2019</div><div class="abs" style="top:20px;font-size:11px;left:367px;width:67px;text-align:center;white-space:nowrap">11:45:28</div><div class="abs" style="top:20px;font-size:11px;left:434px;width:76px;text-align:center;white-space:nowrap">FSF-S -SL...</div><div class="abs" style="top:20px;font-size:11px;left:516px;white-space:nowrap">H:\Documents and S...</div><div class="abs" style="top:20px;font-size:11px;left:631px;width:76px;text-align:center;white-space:nowrap">219.52 bhp</div><div class="abs" style="top:20px;font-size:11px;left:707px;width:77px;text-align:center;white-space:nowrap">5984.5 rpm</div><div class="abs" style="top:20px;font-size:11px;left:784px;width:77px;text-align:center;white-space:nowrap">196.23 Ft/lb</div><div class="abs" style="top:20px;font-size:11px;left:861px;width:77px;text-align:center;white-space:nowrap">5632.9 rpm</div><div class="abs" style="top:20px;font-size:11px;left:944px;white-space:nowrap">1</div><div class="abs" style="left:6px;top:19px;width:12px;height:12px;border:1.5px solid #000;background:#fff"><svg width="10" height="10" viewBox="0 0 10 10" style="position:absolute;left:0;top:0"><path d="M1.5,5 L4,7.5 L8.5,2" fill="none" stroke="#000" stroke-width="1.8"/></svg></div><div class="abs" style="left:20px;top:17px;width:15px;height:15px;background:linear-gradient(to bottom,#F00A0A 0,#F00A0A 7px,#9A0E12 7px,#8A0A0C 15px)"></div>
</div>
<div id="notes" class="abs">
<div class="abs nb" style="left:5.0px;letter-spacing:-0.13px">26-Dyno Run.Dpr</div><div class="abs nb" style="left:103.4px;letter-spacing:0.27px">Air Temperature: 16.7°C</div><div class="abs nb" style="left:246.3px;letter-spacing:0.22px">Air Pressure: 987.9mBar</div><div class="abs nb" style="left:391.7px;letter-spacing:-0.09px">Humidity: 76.1%</div><div class="abs nb" style="left:487.8px;letter-spacing:-0.2px">C/F: 1.02</div><div class="abs nb" style="left:543.0px;letter-spacing:-0.3px">RAD: 95.58%</div><div class="abs nb" style="left:613.4px;letter-spacing:0.37px">Area Power ----</div><div class="abs nb" style="left:706.7px;letter-spacing:0.35px">Area Torque ----</div>
  <div class="abs" style="left:5px;top:13.5px;font-size:11px;letter-spacing:-0.3px">36 28 PULLEYS</div>
</div>
<div class="abs" style="left:13px;top:179px;font-size:11px">Notes</div>
<div id="scroll" class="abs">
  <div class="abs" style="left:0;top:19px;width:1920px;height:2px;background:#3A6FD0"></div>
  <div class="abs" style="left:1px;top:2px;width:17px;height:17px;border-radius:2px;background:linear-gradient(135deg,#D8E2FD,#B9CBF8)"></div>
  <svg class="abs" style="left:5px;top:6px" width="8" height="9" viewBox="0 0 8 9"><path d="M6,1 L2,4.5 L6,8" fill="none" stroke="#4D6185" stroke-width="2"/></svg>
  <div class="abs" style="left:86px;top:2px;width:1741px;height:17px;border-radius:2px;background:linear-gradient(to bottom,#C8D6FA,#B6CBF9 50%,#ADC3F6);border-left:1px solid #E4ECFF"></div>
  <div class="abs" style="left:1900px;top:2px;width:17px;height:17px;border-radius:2px;background:linear-gradient(135deg,#D8E2FD,#B9CBF8)"></div>
  <svg class="abs" style="left:1905px;top:6px" width="8" height="9" viewBox="0 0 8 9"><path d="M2,1 L6,4.5 L2,8" fill="none" stroke="#4D6185" stroke-width="2"/></svg>
</div>
</body></html>
